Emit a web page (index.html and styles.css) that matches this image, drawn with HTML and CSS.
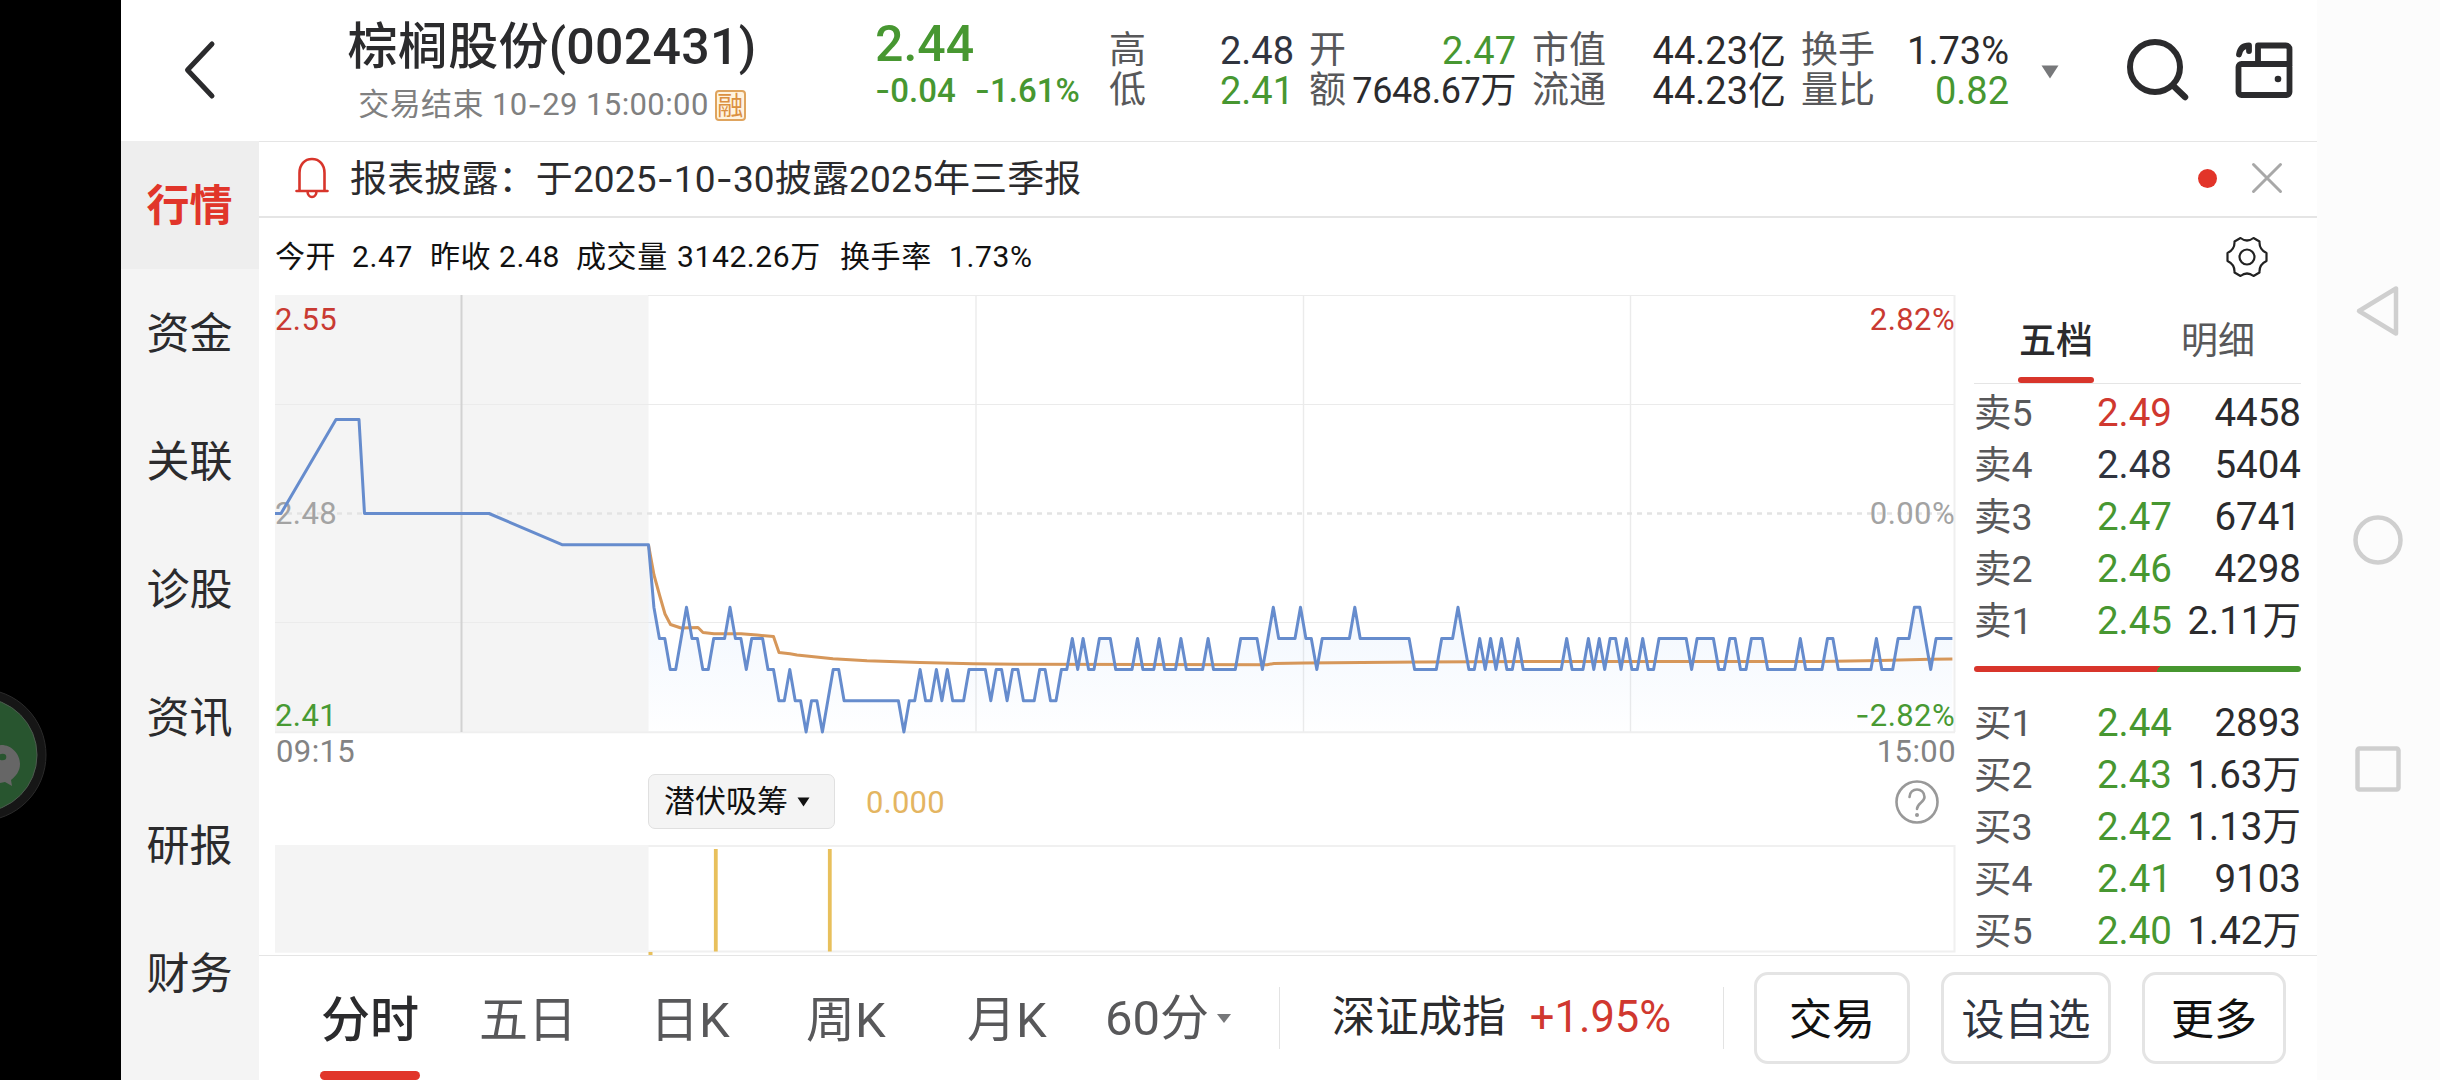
FILE: index.html
```
<!DOCTYPE html>
<html lang="zh-CN">

<head>
    <meta charset="UTF-8">
    <meta name="viewport" content="width=device-width, initial-scale=1.0">
    <title>棕榈股份(002431)</title>
    <link rel="stylesheet" href="styles.css">
</head>

<body>
    <div class="edge">
        <svg width="50" height="140" viewBox="0 0 50 140">
            <circle cx="-20" cy="70" r="66" fill="#161616" stroke="#2a2a2a" />
            <circle cx="-20" cy="70" r="57" fill="#28552f" stroke="#4d5a4f" />
            <path d="M-4 61C8 57 20 67 20 79c0 7-4 12-9 16l1 6-7-4c-3 1-6 1-9 1z" fill="#666" />
            <ellipse cx="2.500" cy="72" rx="3.800" ry="3.300" fill="#28552f" />
        </svg>
    </div>

    <div class="app">
        <div class="header">
            <div class="back">
                <svg width="40" height="64" viewBox="0 0 40 64">
                    <path d="M32 6L7.500 32 32 58" fill="none" stroke="#2b2b2d" stroke-width="5" stroke-linecap="round" stroke-linejoin="round" />
                </svg>
            </div>
            <div class="title">
                <div class="name">棕榈股份(002431)</div>
                <div class="time">交易结束 10<span class="dash">-</span>29 15:00:00<span class="rong">融</span></div>
            </div>
            <div class="price">
                <div class="now">2.44</div>
                <div class="change"><span><span class="dash">-</span>0.04</span><span><span class="dash">-</span>1.61%</span></div>
            </div>
            <div class="stats">
                <div class="stat s1">
                    <p><label>高</label><b class="flat">2.48</b></p>
                    <p><label>低</label><b class="green">2.41</b></p>
                </div>
                <div class="stat s2">
                    <p><label>开</label><b class="green">2.47</b></p>
                    <p><label>额</label><b class="amount">7648.67万</b></p>
                </div>
                <div class="stat s3">
                    <p><label>市值</label><b>44.23亿</b></p>
                    <p><label>流通</label><b>44.23亿</b></p>
                </div>
                <div class="stat s4">
                    <p><label>换手</label><b>1.73%</b></p>
                    <p><label>量比</label><b class="green">0.82</b></p>
                </div>
            </div>
            <svg class="more_arrow" width="18" height="14" viewBox="0 0 18 14">
                <path d="M0.500 0.500h17L9 13.500z" fill="#77787a" />
            </svg>
            <svg class="search" width="68" height="68" viewBox="0 0 68 68">
                <circle cx="31" cy="31" r="25" fill="none" stroke="#2b2b2d" stroke-width="6" />
                <path d="M49 49.500L61 61" stroke="#2b2b2d" stroke-width="6.500" stroke-linecap="round" />
            </svg>
            <svg class="wallet" width="62" height="64" viewBox="0 0 62 64" fill="none" stroke="#2b2b2d" stroke-width="5.800" stroke-linejoin="round">
                <rect x="5.500" y="26" width="51" height="31" rx="3" />
                <path d="M25 26V7.500h28a3.500 3.500 0 0 1 3.500 3.500V28" />
                <path d="M6 16.500C7 10.500 10 7.500 16 7.500V13" stroke-linecap="round" />
                <circle cx="45" cy="41" r="3.300" fill="#2b2b2d" stroke="none" />
            </svg>
        </div>

        <div class="main">
            <div class="sidebar">
                <div class="side_item active">行情</div>
                <div class="side_item">资金</div>
                <div class="side_item">关联</div>
                <div class="side_item">诊股</div>
                <div class="side_item">资讯</div>
                <div class="side_item">研报</div>
                <div class="side_item">财务</div>
            </div>

            <div class="content">
                <div class="notice">
                    <svg class="bell" width="36" height="44" viewBox="0 0 36 44" fill="none" stroke="#d8352b" stroke-width="2.600" stroke-linecap="round">
                        <path d="M2.500 35h31M5.500 35V17C5.500 8.500 10.500 3 18 3s12.500 5.500 12.500 14v18M13.500 35c0 8 9 8 9 0" />
                    </svg>
                    <span class="notice_text">报表披露：于2025<span class="dash">-</span>10<span class="dash">-</span>30披露2025年三季报</span>
                    <i class="dot"></i>
                    <svg width="32" height="32" viewBox="0 0 32 32">
                        <path d="M2.500 2.500l27 27M29.500 2.500l-27 27" stroke="#a8a8a8" stroke-width="3" stroke-linecap="round" />
                    </svg>
                </div>

                <div class="info">
                    <span class="w1">今开</span><span class="w2">2.47</span><span class="w3">昨收</span><span class="w4">2.48</span><span class="w5">成交量</span><span class="w6">3142.26万</span><span class="w7">换手率</span><span>1.73%</span>
                    <svg class="gear" width="44" height="44" viewBox="0 0 44 44" fill="none" stroke="#222" stroke-width="2.200" stroke-linejoin="round">
                        <path d="M15.500 3Q22 8 28.500 3L34.500 6.500Q34 14.500 41.500 18V26Q34 29.500 34.500 37.500L28.500 41Q22 36 15.500 41L9.500 37.500Q10 29.500 2.500 26V18Q10 14.500 9.500 6.500Z" />
                        <circle cx="22" cy="22" r="7.500" />
                    </svg>
                </div>

                <div class="panel">
                    <div class="chart">
                        <svg class="trend" width="1682" height="479" viewBox="0 0 1682 479">
                            <defs>
                                <linearGradient id="fade" x1="0" y1="312" x2="0" y2="437" gradientUnits="userSpaceOnUse">
                                    <stop offset="0" stop-color="#5f9df0" stop-opacity="0.080" />
                                    <stop offset="1" stop-color="#5f9df0" stop-opacity="0.005" />
                                </linearGradient>
                            </defs>
                            <rect x="0" y="0" width="373.500" height="437.500" fill="#f4f4f4" />
                            <path d="M373 0.500H1680M0 109.500H1680M0 327.500H1680" stroke="#ebebeb" />
                            <path d="M701 0V437M1028.500 0V437M1355.500 0V437" stroke="#ebebeb" stroke-width="1.400" />
                            <path d="M1679.500 0V437M0 437.200H1680" stroke="#efefef" stroke-width="2" />
                            <path d="M186.500 0V437" stroke="#d2d2d2" stroke-width="2" />
                            <path d="M2 218.500H1680" stroke="#e3e3e3" stroke-width="2.500" stroke-dasharray="5 5" />
                            <polygon id="area" fill="url(#fade)" />
                            <g class="labels">
                                <text x="0" y="35" fill="#c93a32">2.55</text>
                                <text x="0" y="229" fill="#a3a3a3">2.48</text>
                                <text x="0" y="431" fill="#489a33">2.41</text>
                                <text x="1" y="467" fill="#838383">09:15</text>
                                <text x="1680" y="35" fill="#c93a32" text-anchor="end">2.82%</text>
                                <text x="1680" y="229" fill="#a3a3a3" text-anchor="end">0.00%</text>
                                <text x="1680" y="431" fill="#489a33" text-anchor="end"><tspan class="dash">-</tspan>2.82%</text>
                                <text x="1681" y="467" fill="#838383" text-anchor="end">15:00</text>
                            </g>
                            <polyline fill="none" stroke="#d6975a" stroke-width="3" stroke-linejoin="round" points="373.500,250 379,280 384.500,300 390,319 395.500,329.500 406,333 423,332.500 428,337.500 439,338.700 466,338.700 482,340 498.500,341.500 504,357.500 515,358.700 522,360 558,363.700 592,365.700 645,367.500 698,368.700 755,369.300 992,369.700 999,368.500 1029,368 1145,367 1265,366.500 1545,366.500 1605,365.500 1655,364.300 1677.400,364" />
                            <polyline id="line" fill="none" stroke="#668ccd" stroke-width="3" stroke-linejoin="round" />
                        </svg>
                        <div class="tool">
                            <div class="select">潜伏吸筹<svg width="13" height="10" viewBox="0 0 13 10"><path d="M0.500 0.500h12L6.500 9.500z" fill="#111" /></svg></div>
                            <span class="value">0.000</span>
                            <svg class="help" width="46" height="46" viewBox="0 0 46 46" fill="none" stroke="#999" stroke-width="2.600" stroke-linecap="round">
                                <circle cx="23" cy="23" r="20.500" />
                                <path d="M15.500 18c0-10 15-10 15 0 0 5.500-7.500 6-7.500 12" />
                                <circle cx="23" cy="36" r="2" fill="#999" stroke="none" />
                            </svg>
                        </div>
                        <svg class="sub" width="1682" height="110" viewBox="0 0 1682 110">
                            <path d="M0 1H1679.500V106.500H0" fill="none" stroke="#f0f0f0" stroke-width="2" />
                            <rect width="373.500" height="107" fill="#f4f4f4" />
                            <path d="M440.800 4V106.500M554.800 4V106.500" stroke="#e8c05c" stroke-width="3.800" />
                            <rect x="373.500" y="107" width="4" height="3" fill="#e8c05c" />
                        </svg>
                    </div>

                    <div class="book">
                        <div class="tabs">
                            <div class="tab on">五档</div>
                            <div class="tab">明细</div>
                        </div>
                        <div class="rows sell">
                            <div class="row"><span>卖5</span><span class="red">2.49</span><span>4458</span></div>
                            <div class="row"><span>卖4</span><span class="flat">2.48</span><span>5404</span></div>
                            <div class="row"><span>卖3</span><span class="green">2.47</span><span>6741</span></div>
                            <div class="row"><span>卖2</span><span class="green">2.46</span><span>4298</span></div>
                            <div class="row"><span>卖1</span><span class="green">2.45</span><span>2.11万</span></div>
                        </div>
                        <div class="ratio"></div>
                        <div class="rows buy">
                            <div class="row"><span>买1</span><span class="green">2.44</span><span>2893</span></div>
                            <div class="row"><span>买2</span><span class="green">2.43</span><span>1.63万</span></div>
                            <div class="row"><span>买3</span><span class="green">2.42</span><span>1.13万</span></div>
                            <div class="row"><span>买4</span><span class="green">2.41</span><span>9103</span></div>
                            <div class="row"><span>买5</span><span class="green">2.40</span><span>1.42万</span></div>
                        </div>
                    </div>
                </div>

                <div class="bottom">
                    <div class="period on">分时</div>
                    <div class="period p2">五日</div>
                    <div class="period p3">日K</div>
                    <div class="period p4">周K</div>
                    <div class="period p5">月K</div>
                    <div class="period p6">60分<svg width="14" height="9" viewBox="0 0 14 9"><path d="M0 0h14L7 9z" fill="#77787a" /></svg></div>
                    <div class="index"><span>深证成指</span><span class="red">+1.95%</span></div>
                    <div class="btn b1">交易</div>
                    <div class="btn b2">设自选</div>
                    <div class="btn b3">更多</div>
                </div>
            </div>
        </div>
    </div>

    <div class="sysnav">
        <svg width="50" height="54" viewBox="0 0 50 54"><path d="M43 4.500V49.500L6 27z" /></svg>
        <svg width="52" height="52" viewBox="0 0 52 52"><circle cx="26" cy="26" r="22.500" /></svg>
        <svg width="50" height="50" viewBox="0 0 50 50"><rect x="4.500" y="4.500" width="41" height="41" rx="2" /></svg>
    </div>

    <script>
        // 每分钟价格，单位分，相对 2.41
        var data = "6433223433" + "2233343323" + "3322112110" + "1101221111" + "1111111011" + "2112121112"
            + "2221221221" + "1122112232" + "3223332222" + "3222322232" + "2223222223" + "3332343333"
            + "4332333333" + "4333333333" + "3222223334" + "3223232322" + "3222222223" + "2223232332"
            + "3223223333" + "3323333223" + "3223332222" + "2232222332" + "2222223222" + "33344323333";

        var left = 373.5, bottom = 437, step = 5.433, unit = 31.2;
        var points = [];
        for (var i = 0; i < data.length; i++) {
            points.push((left + i * step).toFixed(1) + "," + (bottom - data[i] * unit).toFixed(1));
        }

        // 集合竞价
        var before = "0,218.5 6,218.5 61,124.6 84,124.6 89.500,218.5 214,218.5 287,249.7 ";
        document.getElementById("line").setAttribute("points", before + points.join(" "));

        // 线下方的渐变
        var right = left + (data.length - 1) * step;
        document.getElementById("area").setAttribute("points", left + "," + bottom + " " + points.join(" ") + " " + right + "," + bottom);
    </script>
</body>

</html>
```
FILE: styles.css
```
* {
    margin: 0;
    padding: 0;
    box-sizing: border-box;
}

body {
    display: flex;
    width: 2440px;
    height: 1080px;
    overflow: hidden;
    background-color: #fff;
    color: #2b2b2d;
    font-family: Roboto, "Noto Sans CJK SC", sans-serif;
    white-space: nowrap;
}

svg {
    display: block;
    flex-shrink: 0;
}

.dash {
    font-family: Inter, sans-serif;
}

.red {
    color: #d0382f;
}

.green {
    color: #479731;
}

.flat {
    color: #30343f;
}

/* 左侧黑边 */
.edge {
    width: 121px;
    background-color: #000;
    padding-top: 685px;
}

.app {
    width: 2196px;
}

/* 顶部 */
.header {
    display: flex;
    height: 141px;
}

.back {
    width: 202px;
    padding: 38px 0 0 59px;
}

.title {
    width: 458px;
    display: flex;
    flex-direction: column;
    align-items: center;
}

.name {
    height: 60px;
    margin-top: 17px;
    line-height: 60px;
    font-size: 50px;
    font-weight: 500;
    letter-spacing: 0.3px;
}

.time {
    display: flex;
    align-items: center;
    height: 40px;
    margin-top: 8px;
    line-height: 40px;
    font-size: 31px;
    letter-spacing: 0.4px;
    color: #808080;
    white-space: pre;
}

.rong {
    width: 31px;
    height: 31px;
    margin-left: 6px;
    border: 2px solid #dfa45e;
    border-radius: 4px;
    background-color: #fff3df;
    color: #db9040;
    font-size: 26px;
    line-height: 28px;
    letter-spacing: 0;
    text-align: center;
}

.price {
    width: 233px;
    margin-left: 94px;
    margin-right: 1px;
    color: #479731;
    font-weight: 500;
}

.now {
    height: 60px;
    margin-top: 14px;
    font-size: 50px;
    line-height: 60px;
}

.change {
    display: flex;
    gap: 19px;
    height: 32px;
    font-size: 33px;
    line-height: 32px;
}

.stats {
    display: flex;
    padding-top: 31px;
}

.stat p {
    display: flex;
    justify-content: space-between;
    height: 40px;
    font-size: 38px;
    line-height: 40px;
}

.stat label {
    color: #58585a;
    font-size: 37px;
}

.stat b {
    font-weight: 400;
}

.stat .amount {
    font-size: 36px;
    letter-spacing: -0.4px;
}

.s1 {
    width: 185px;
    margin-right: 15px;
}

.s2 {
    width: 207px;
    margin-right: 16px;
}

.s3 {
    width: 254px;
    margin-right: 15px;
}

.s4 {
    width: 208px;
}

.more_arrow {
    margin: 65px 0 0 32px;
}

.search {
    margin: 36px 0 0 65px;
}

.wallet {
    margin: 38px 0 0 41px;
}

/* 左侧菜单 */
.main {
    display: flex;
    height: 939px;
}

.sidebar {
    width: 138px;
    background-color: #f4f4f4;
}

.side_item {
    height: 128px;
    padding-right: 1px;
    line-height: 131px;
    font-size: 43px;
    text-align: center;
}

.side_item.active {
    background-color: #eee;
    color: #e1352a;
    font-weight: bold;
}

.content {
    width: 2058px;
    border-top: 1px solid #e5e5e5;
}

.notice {
    display: flex;
    align-items: center;
    height: 76px;
    padding: 0 34px 2px 35px;
    border-bottom: 2px solid #e5e5e5;
}

.notice_text {
    margin-left: 20px;
    padding-top: 3px;
    font-size: 37px;
    line-height: 60px;
    letter-spacing: 0.15px;
}

.dot {
    width: 19px;
    height: 19px;
    margin-left: auto;
    margin-right: 34px;
    border-radius: 50%;
    background-color: #e23429;
}

.info {
    display: flex;
    align-items: center;
    height: 77px;
    padding: 0 48px 0 16px;
    color: #111;
    font-size: 30px;
    line-height: 44px;
    letter-spacing: 0.6px;
}

.w1 {
    width: 77px;
}

.w2 {
    width: 78px;
}

.w3 {
    width: 69px;
}

.w4 {
    width: 77px;
}

.w5 {
    width: 101px;
}

.w6 {
    width: 163px;
}

.w7 {
    width: 109px;
}

.gear {
    margin-left: auto;
}

/* 分时图 */
.panel {
    display: flex;
    height: 660px;
    padding-left: 16px;
}

.chart {
    width: 1682px;
}

.labels {
    font-size: 31px;
    letter-spacing: 0.4px;
}

.tool {
    display: flex;
    align-items: center;
    height: 55px;
    padding: 0 17px 0 373px;
}

.select {
    display: flex;
    align-items: center;
    justify-content: space-between;
    width: 187px;
    height: 55px;
    padding: 0 24px 0 15px;
    border: 1px solid #e0e0e0;
    border-radius: 7px;
    background-color: #f4f4f4;
    color: #111;
    font-size: 31px;
    line-height: 52px;
}

.value {
    margin-left: 31px;
    padding-top: 2px;
    color: #e4b561;
    font-size: 31px;
    letter-spacing: 0.2px;
}

.help {
    margin-left: auto;
}

.sub {
    margin-top: 16px;
}

/* 五档 */
.book {
    width: 327px;
    margin-left: 17px;
}

.tabs {
    display: flex;
    height: 89px;
    border-bottom: 1px solid #e5e5e5;
}

.tab {
    width: 160px;
    color: #58585a;
    font-size: 37px;
    line-height: 94px;
    text-align: center;
}

.tab.on {
    position: relative;
    width: 164px;
    color: #2b2b2d;
    font-weight: 500;
}

.tab.on::after {
    content: "";
    position: absolute;
    left: 44px;
    bottom: 0;
    width: 76px;
    height: 6px;
    border-radius: 3px;
    background-color: #d8352b;
}

.sell {
    padding-top: 2px;
}

.row {
    display: grid;
    grid-template-columns: 90px 108px 129px;
    height: 52px;
    font-size: 38.5px;
    line-height: 54px;
    text-align: right;
}

.row span:first-child {
    color: #58585a;
    font-size: 37.5px;
    text-align: left;
}

.ratio {
    height: 6px;
    margin: 20px 0 24px;
    border-radius: 3px;
    background: linear-gradient(120deg, #d8352b 0 161px, #46962f 161px);
}

/* 底部 */
.bottom {
    display: flex;
    height: 125px;
    border-top: 1px solid #e5e5e5;
    line-height: 129px;
}

.period {
    position: relative;
    color: #58585a;
    font-size: 49px;
}

.period.on {
    width: 100px;
    margin-left: 61px;
    color: #2b2b2d;
    font-weight: 500;
    text-align: center;
}

.period.on::after {
    content: "";
    position: absolute;
    left: 0;
    bottom: 0;
    width: 100px;
    height: 9px;
    border-radius: 5px;
    background-color: #e1352a;
}

.p2 {
    width: 171px;
    margin-left: 59px;
}

.p3 {
    width: 156px;
}

.p4 {
    width: 161px;
}

.p5 {
    width: 138px;
}

.p6 {
    display: flex;
    align-items: center;
    width: 174px;
}

.p6 svg {
    margin-left: 8px;
}

.index {
    display: flex;
    align-items: center;
    justify-content: center;
    gap: 24px;
    width: 445px;
    height: 62px;
    margin-top: 31px;
    border-left: 1px solid #e3e3e3;
    border-right: 1px solid #e3e3e3;
    font-size: 43.5px;
    line-height: 66px;
}

.btn {
    height: 92px;
    margin-top: 16px;
    border: 3px solid #e4e4e4;
    border-radius: 14px;
    color: #111;
    font-size: 43px;
    line-height: 90px;
    text-align: center;
}

.b1 {
    width: 156px;
    margin-left: 30px;
}

.b2 {
    width: 170px;
    margin-left: 31px;
    color: #30343f;
}

.b3 {
    width: 144px;
    margin-left: 31px;
}

/* 系统导航键 */
.sysnav {
    display: flex;
    flex-direction: column;
    align-items: center;
    width: 123px;
    padding: 284px 1px 0 0;
    background-color: #fcfcfc;
}

.sysnav svg {
    fill: none;
    stroke: #cfcfcf;
    stroke-width: 4.5;
    stroke-linejoin: round;
}

.sysnav svg + svg {
    margin-top: 176px;
}

.sysnav svg:last-child {
    margin-top: 178px;
}
```
